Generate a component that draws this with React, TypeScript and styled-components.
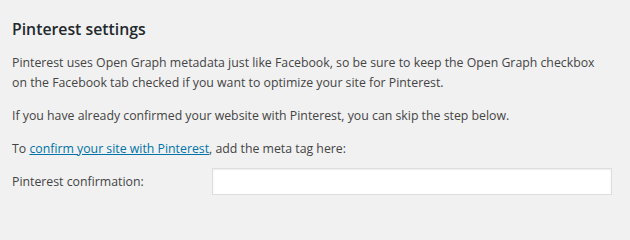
import React from "react";
import styled, { createGlobalStyle } from "styled-components";

const GlobalStyle = createGlobalStyle`
  body {
    margin: 0;
    background: #f1f1f1;
    font-family: "Open Sans", "Noto Sans", sans-serif;
    font-size: 12.3px;
    color: #444;
  }
`;

const Panel = styled.div`
  padding: 0 12px;
  width: 606px;
`;

const Title = styled.h2`
  margin: 0 0 2px;
  padding-top: 18px;
  font-size: 15.8px;
  font-weight: 600;
  color: #23282d;
  line-height: 22px;
`;

const Text = styled.p<{ $gap?: number }>`
  max-width: 590px;
  margin: ${(p) => p.$gap ?? 13}px 0 0;
  line-height: 19.5px;
`;

const Link = styled.a`
  color: #0073aa;
  text-decoration: underline;
`;

const Row = styled.div`
  display: grid;
  grid-template-columns: 200px 400px;
  align-items: center;
  margin-top: 10px;
`;

const Label = styled.label``;

const Input = styled.input`
  box-sizing: border-box;
  width: 400px;
  height: 27px;
  margin: 0;
  border: 1px solid #ddd;
  box-shadow: inset 0 1px 2px rgba(0, 0, 0, 0.07);
  background: #fff;
  font: inherit;
`;

export default function App() {
  return (
    <>
      <GlobalStyle />
      <Panel>
        <Title>Pinterest settings</Title>
        <Text>
          Pinterest uses Open Graph metadata just like Facebook, so be sure to
          keep the Open Graph checkbox on the Facebook tab checked if you want
          to optimize your site for Pinterest.
        </Text>
        <Text $gap={14}>
          If you have already confirmed your website with Pinterest, you can
          skip the step below.
        </Text>
        <Text>
          To <Link href="#">confirm your site with Pinterest</Link>, add the
          meta tag here:
        </Text>
        <Row>
          <Label htmlFor="pin">Pinterest confirmation:</Label>
          <Input id="pin" type="text" />
        </Row>
      </Panel>
    </>
  );
}
